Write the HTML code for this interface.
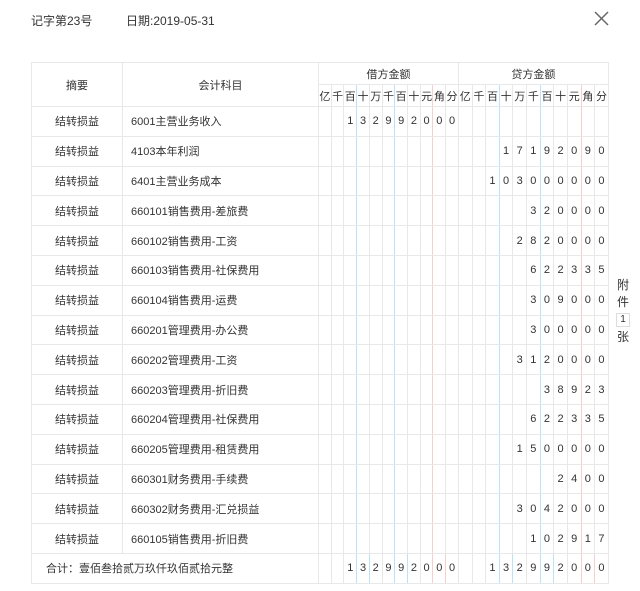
<!DOCTYPE html>
<html><head><meta charset="utf-8"><style>
body{margin:0;width:640px;height:591px;background:#fff;font-family:"Liberation Sans","Noto Sans CJK SC",sans-serif;color:#333;position:relative;overflow:hidden}
.top{position:absolute;top:12px;font-size:12px}
table{position:absolute;left:31px;top:62px;border-collapse:collapse;table-layout:fixed;font-size:11px}
td{border:1px solid #e8e8e8;text-align:center;padding:0;white-space:nowrap}
tr.h1 td{height:21px}
tr.h2 td{height:21px;font-size:11px}
tr.d td{height:28.8px}
td.l{text-align:left;padding-left:8px}
tr.d td:nth-child(5),tr.d td:nth-child(8),tr.d td:nth-child(16),tr.d td:nth-child(19){border-right-color:#bfe1f8}
tr.d td:nth-child(11),tr.d td:nth-child(22){border-right-color:#f6cfcf}
tr.h2 td:nth-child(3),tr.h2 td:nth-child(6),tr.h2 td:nth-child(14),tr.h2 td:nth-child(17){border-right-color:#bfe1f8}
tr.h2 td:nth-child(9),tr.h2 td:nth-child(20){border-right-color:#f6cfcf}
tr.t td:nth-child(4),tr.t td:nth-child(7),tr.t td:nth-child(15),tr.t td:nth-child(18){border-right-color:#bfe1f8}
tr.t td:nth-child(10),tr.t td:nth-child(21){border-right-color:#f6cfcf}
.side{position:absolute;left:615px;top:277px;width:16px;font-size:12px;text-align:center;line-height:17px}
.box{border:1px solid #ddd;font-size:10px;line-height:12px;margin:2px 1px}
</style></head><body>
<div class="top" style="left:31px">记字第23号</div>
<div class="top" style="left:126px">日期:2019-05-31</div>
<svg style="position:absolute;left:594px;top:11px" width="15" height="15"><path d="M1 1L14 14M14 1L1 14" stroke="#666" stroke-width="1.5"/></svg>
<div class="side">附<br>件<div class="box">1</div>张</div>
<table>
<colgroup><col style="width:91px"><col style="width:196px">
<col style="width:12.73px"><col style="width:12.73px"><col style="width:12.73px"><col style="width:12.73px"><col style="width:12.73px"><col style="width:12.73px"><col style="width:12.73px"><col style="width:12.73px"><col style="width:12.73px"><col style="width:12.73px"><col style="width:12.73px">
<col style="width:13.64px"><col style="width:13.64px"><col style="width:13.64px"><col style="width:13.64px"><col style="width:13.64px"><col style="width:13.64px"><col style="width:13.64px"><col style="width:13.64px"><col style="width:13.64px"><col style="width:13.64px"><col style="width:13.64px"></colgroup>
<tr class="h1"><td rowspan="2">摘要</td><td rowspan="2">会计科目</td><td colspan="11">借方金额</td><td colspan="11">贷方金额</td></tr>
<tr class="h2"><td>亿</td><td>千</td><td>百</td><td>十</td><td>万</td><td>千</td><td>百</td><td>十</td><td>元</td><td>角</td><td>分</td><td>亿</td><td>千</td><td>百</td><td>十</td><td>万</td><td>千</td><td>百</td><td>十</td><td>元</td><td>角</td><td>分</td></tr>
<tr class="d"><td>结转损益</td><td class="l">6001主营业务收入</td><td></td><td></td><td>1</td><td>3</td><td>2</td><td>9</td><td>9</td><td>2</td><td>0</td><td>0</td><td>0</td><td></td><td></td><td></td><td></td><td></td><td></td><td></td><td></td><td></td><td></td><td></td></tr>
<tr class="d"><td>结转损益</td><td class="l">4103本年利润</td><td></td><td></td><td></td><td></td><td></td><td></td><td></td><td></td><td></td><td></td><td></td><td></td><td></td><td></td><td>1</td><td>7</td><td>1</td><td>9</td><td>2</td><td>0</td><td>9</td><td>0</td></tr>
<tr class="d"><td>结转损益</td><td class="l">6401主营业务成本</td><td></td><td></td><td></td><td></td><td></td><td></td><td></td><td></td><td></td><td></td><td></td><td></td><td></td><td>1</td><td>0</td><td>3</td><td>0</td><td>0</td><td>0</td><td>0</td><td>0</td><td>0</td></tr>
<tr class="d"><td>结转损益</td><td class="l">660101销售费用-差旅费</td><td></td><td></td><td></td><td></td><td></td><td></td><td></td><td></td><td></td><td></td><td></td><td></td><td></td><td></td><td></td><td></td><td>3</td><td>2</td><td>0</td><td>0</td><td>0</td><td>0</td></tr>
<tr class="d"><td>结转损益</td><td class="l">660102销售费用-工资</td><td></td><td></td><td></td><td></td><td></td><td></td><td></td><td></td><td></td><td></td><td></td><td></td><td></td><td></td><td></td><td>2</td><td>8</td><td>2</td><td>0</td><td>0</td><td>0</td><td>0</td></tr>
<tr class="d"><td>结转损益</td><td class="l">660103销售费用-社保费用</td><td></td><td></td><td></td><td></td><td></td><td></td><td></td><td></td><td></td><td></td><td></td><td></td><td></td><td></td><td></td><td></td><td>6</td><td>2</td><td>2</td><td>3</td><td>3</td><td>5</td></tr>
<tr class="d"><td>结转损益</td><td class="l">660104销售费用-运费</td><td></td><td></td><td></td><td></td><td></td><td></td><td></td><td></td><td></td><td></td><td></td><td></td><td></td><td></td><td></td><td></td><td>3</td><td>0</td><td>9</td><td>0</td><td>0</td><td>0</td></tr>
<tr class="d"><td>结转损益</td><td class="l">660201管理费用-办公费</td><td></td><td></td><td></td><td></td><td></td><td></td><td></td><td></td><td></td><td></td><td></td><td></td><td></td><td></td><td></td><td></td><td>3</td><td>0</td><td>0</td><td>0</td><td>0</td><td>0</td></tr>
<tr class="d"><td>结转损益</td><td class="l">660202管理费用-工资</td><td></td><td></td><td></td><td></td><td></td><td></td><td></td><td></td><td></td><td></td><td></td><td></td><td></td><td></td><td></td><td>3</td><td>1</td><td>2</td><td>0</td><td>0</td><td>0</td><td>0</td></tr>
<tr class="d"><td>结转损益</td><td class="l">660203管理费用-折旧费</td><td></td><td></td><td></td><td></td><td></td><td></td><td></td><td></td><td></td><td></td><td></td><td></td><td></td><td></td><td></td><td></td><td></td><td>3</td><td>8</td><td>9</td><td>2</td><td>3</td></tr>
<tr class="d"><td>结转损益</td><td class="l">660204管理费用-社保费用</td><td></td><td></td><td></td><td></td><td></td><td></td><td></td><td></td><td></td><td></td><td></td><td></td><td></td><td></td><td></td><td></td><td>6</td><td>2</td><td>2</td><td>3</td><td>3</td><td>5</td></tr>
<tr class="d"><td>结转损益</td><td class="l">660205管理费用-租赁费用</td><td></td><td></td><td></td><td></td><td></td><td></td><td></td><td></td><td></td><td></td><td></td><td></td><td></td><td></td><td></td><td>1</td><td>5</td><td>0</td><td>0</td><td>0</td><td>0</td><td>0</td></tr>
<tr class="d"><td>结转损益</td><td class="l">660301财务费用-手续费</td><td></td><td></td><td></td><td></td><td></td><td></td><td></td><td></td><td></td><td></td><td></td><td></td><td></td><td></td><td></td><td></td><td></td><td></td><td>2</td><td>4</td><td>0</td><td>0</td></tr>
<tr class="d"><td>结转损益</td><td class="l">660302财务费用-汇兑损益</td><td></td><td></td><td></td><td></td><td></td><td></td><td></td><td></td><td></td><td></td><td></td><td></td><td></td><td></td><td></td><td>3</td><td>0</td><td>4</td><td>2</td><td>0</td><td>0</td><td>0</td></tr>
<tr class="d"><td>结转损益</td><td class="l">660105销售费用-折旧费</td><td></td><td></td><td></td><td></td><td></td><td></td><td></td><td></td><td></td><td></td><td></td><td></td><td></td><td></td><td></td><td></td><td>1</td><td>0</td><td>2</td><td>9</td><td>1</td><td>7</td></tr>
<tr class="d t"><td colspan="2" class="l" style="padding-left:14px">合计：壹佰叁拾贰万玖仟玖佰贰拾元整</td><td></td><td></td><td>1</td><td>3</td><td>2</td><td>9</td><td>9</td><td>2</td><td>0</td><td>0</td><td>0</td><td></td><td></td><td>1</td><td>3</td><td>2</td><td>9</td><td>9</td><td>2</td><td>0</td><td>0</td><td>0</td></tr>
</table>
</body></html>
